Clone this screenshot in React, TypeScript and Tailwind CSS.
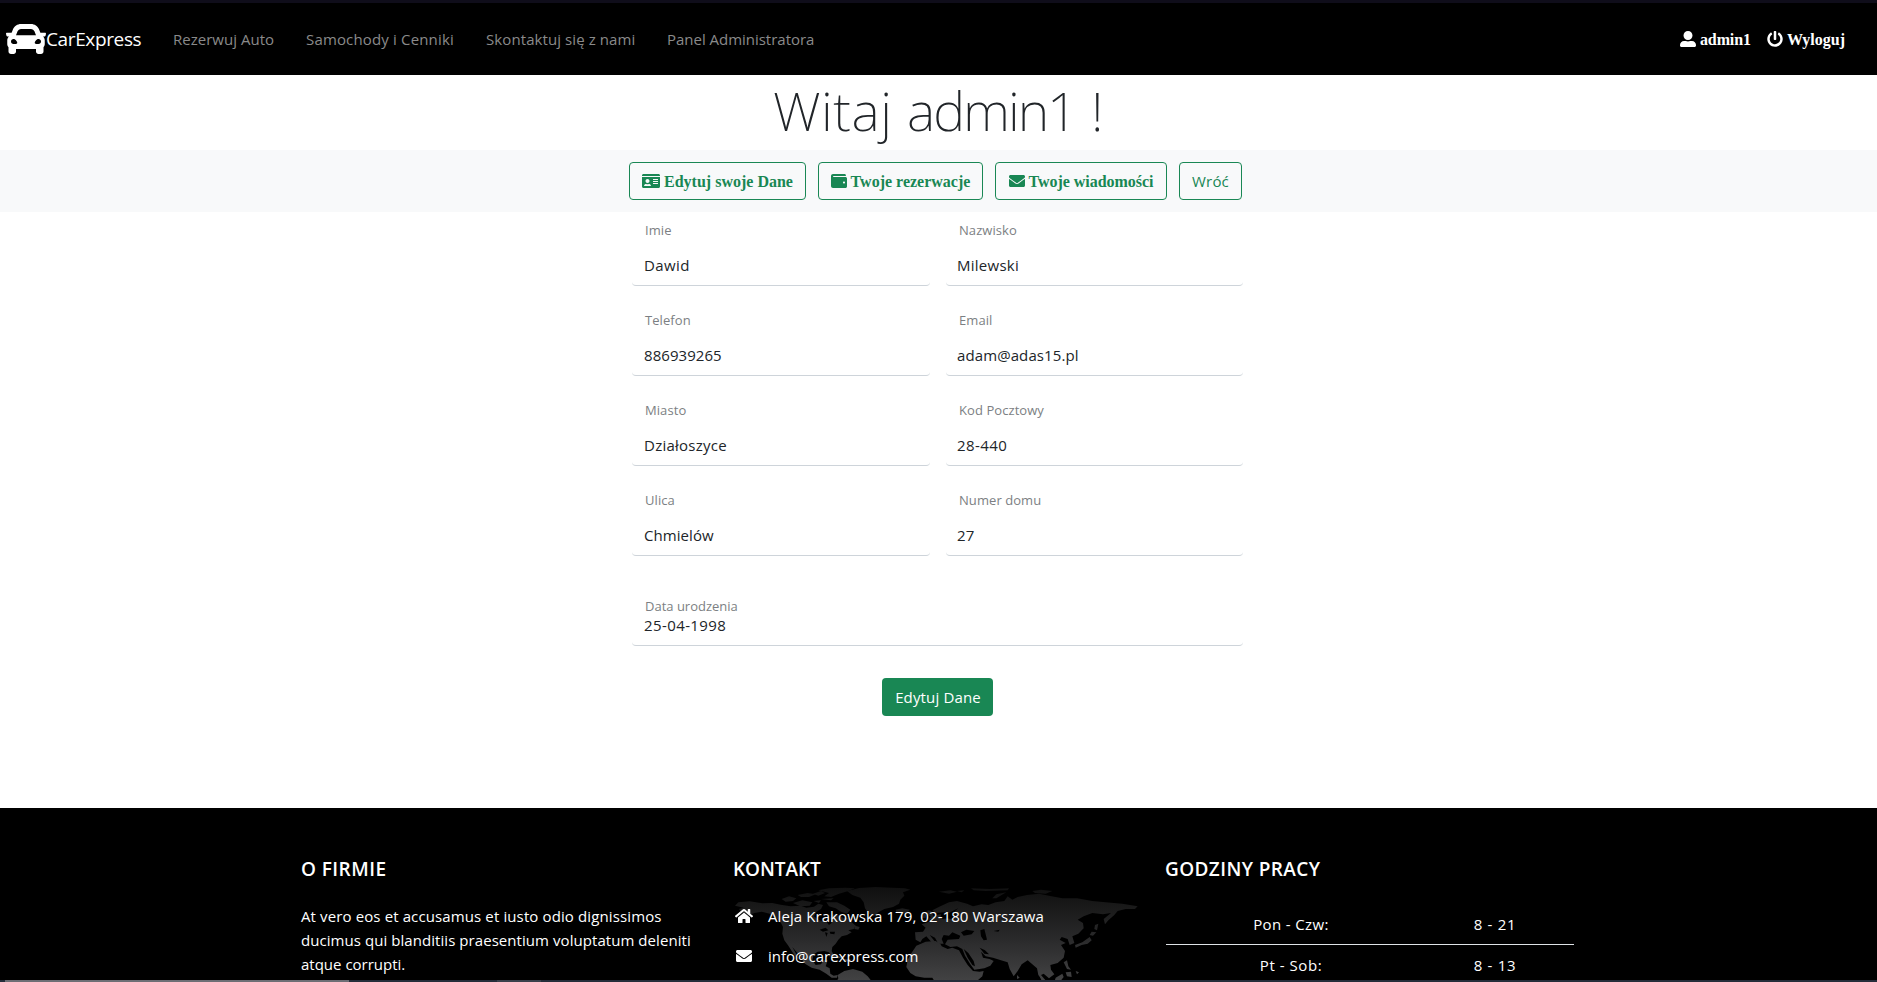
import type { ReactNode } from "react";
import {
  FaCar,
  FaEnvelope,
  FaHome,
  FaIdCard,
  FaPowerOff,
  FaUserAlt,
  FaWallet,
} from "react-icons/fa";

const sans = "font-['Open_Sans','Noto_Sans',sans-serif]";
const serif = "font-['Liberation_Serif',serif] font-bold text-[16px] leading-6";

function Navbar() {
  return (
    <nav className="flex h-[75px] items-center border-t-[3px] border-[#0f0d1a] bg-black pl-[6px] text-[15px] leading-6 text-[#8a8a8a]">
      <a className="flex w-[167px] items-center text-white">
        <FaCar className="size-10 shrink-0" />
        <span className="text-[19px] tracking-[-0.37px]">CarExpress</span>
      </a>
      <a className="w-[133px] tracking-[0.02px]">Rezerwuj Auto</a>
      <a className="w-[180px] tracking-[0.16px]">Samochody i Cenniki</a>
      <a className="w-[181px] tracking-[0.09px]">Skontaktuj się z nami</a>
      <a className="tracking-[-0.02px]">Panel Administratora</a>
      <div className={`ml-auto flex items-center gap-4 pr-8 text-white ${serif}`}>
        <a className="flex items-center gap-1 tracking-[-0.1px]">
          <FaUserAlt className="size-4" />
          <span className="pt-0.5">admin1</span>
        </a>
        <a className="flex items-center gap-1">
          <FaPowerOff className="size-4" />
          <span className="pt-0.5">Wyloguj</span>
        </a>
      </div>
    </nav>
  );
}

function OutlineButton({ icon, children, className }: { icon?: ReactNode; children: ReactNode; className: string }) {
  return (
    <button
      className={`flex h-[38px] items-center justify-center gap-1 whitespace-nowrap rounded border border-[#198754] text-[#198754] ${className}`}
    >
      {icon}
      <span className={icon ? "pt-0.5" : ""}>{children}</span>
    </button>
  );
}

function Field({ label, value, tracking }: { label: string; value: string; tracking: string }) {
  return (
    <div className="flex h-[74px] flex-col rounded-[4px] border-b border-[#ced4da] pt-2 pl-3">
      <label className="pl-px text-[13px] leading-5 tracking-[0.07px] text-[#7c7f83]">{label}</label>
      <span className={`mt-[13px] text-[15px] leading-6 text-[#212529] ${tracking}`}>{value}</span>
    </div>
  );
}

const fields = [
  { label: "Imie", value: "Dawid", tracking: "tracking-[0.4px]" },
  { label: "Nazwisko", value: "Milewski", tracking: "tracking-[0.26px] -ml-px" },
  { label: "Telefon", value: "886939265", tracking: "tracking-[0.05px]" },
  { label: "Email", value: "adam@adas15.pl", tracking: "tracking-[0.1px] -ml-px" },
  { label: "Miasto", value: "Działoszyce", tracking: "tracking-[0.25px]" },
  { label: "Kod Pocztowy", value: "28-440", tracking: "tracking-[0.4px] -ml-px" },
  { label: "Ulica", value: "Chmielów", tracking: "tracking-[0.06px]" },
  { label: "Numer domu", value: "27", tracking: "tracking-[0.2px] -ml-px" },
];

function WorldMap() {
  return (
    <svg className="absolute top-[78px] left-0 h-[96px] w-[408px]" viewBox="42 285 1224 288" aria-hidden="true">
      <defs>
        <linearGradient id="land" x1="0" y1="285" x2="0" y2="573" gradientUnits="userSpaceOnUse">
          <stop offset="0" stopColor="#0f0f0f" />
          <stop offset="0.5" stopColor="#272728" />
          <stop offset="1" stopColor="#434344" />
        </linearGradient>
      </defs>
      <g fill="url(#land)">
        {/* North and Central America */}
        <path d="M48 344L58 334 92 331 130 337 160 336 185 341 215 346 245 344 262 350 285 347 298 338 312 342 306 354 292 362 285 376 300 388 322 392 330 402 338 396 334 380 344 370 362 374 374 382 388 380 398 394 410 404 404 414 388 418 398 424 384 432 368 436 358 446 350 458 340 468 338 480 344 492 338 496 330 484 316 480 296 482 284 490 280 508 290 522 306 520 314 508 326 508 320 526 332 532 334 548 344 554 356 552 354 560 338 560 322 548 302 536 278 530 258 518 246 500 232 482 220 468 232 490 240 506 232 500 218 480 208 464 196 448 190 428 192 408 186 396 172 380 152 368 128 362 106 366 92 372 70 382 84 368 66 362 60 354 74 350Z" />
        <path d="M188 324L210 316 232 322 222 330 200 332ZM222 336L250 328 280 334 272 344 244 346ZM236 312L266 306 290 310 270 318 246 318ZM282 308L306 300 318 306 298 314ZM284 330L306 328 300 336ZM298 298L330 292 380 290 408 292 388 300 360 308 336 318 316 316 330 306ZM306 324L344 322 336 328ZM322 334L354 334 376 344 394 356 384 368 366 362 350 352 330 346ZM326 494L346 490 370 500 358 502 340 498ZM376 504L398 506 392 512 376 510ZM408 404L422 408 418 416 406 414Z" />
        {/* Greenland and Iceland */}
        <path d="M384 300L420 291 470 288 520 290 558 292 574 296 552 304 556 314 544 326 540 338 522 348 496 354 478 364 464 376 450 368 438 352 434 334 424 320 400 312ZM530 356L550 352 572 356 566 364 546 368 532 364Z" />
        {/* South America */}
        <path d="M356 552L376 540 402 534 430 542 446 556 460 573 352 573 358 562Z" />
        {/* Europe and Asia */}
        <path d="M590 446L588 424 612 422 620 410 608 400 626 394 640 386 650 372 666 370 664 384 700 382 712 370 706 362 718 352 708 356 690 366 676 364 650 366 640 358 664 346 690 334 714 330 744 338 762 346 788 340 808 342 830 334 856 330 866 316 880 326 896 318 924 312 960 308 990 314 1030 322 1074 322 1120 330 1160 334 1210 338 1256 346 1248 354 1220 354 1196 360 1186 372 1168 388 1158 400 1154 384 1176 366 1152 370 1120 366 1094 376 1076 386 1092 396 1094 412 1078 428 1060 436 1066 456 1052 462 1046 444 1028 438 1022 446 1040 456 1026 462 1038 480 1034 500 1016 516 994 522 996 536 1006 550 990 562 974 548 966 552 984 573 974 573 958 552 954 532 940 520 926 508 908 520 896 540 884 556 872 534 866 514 846 508 822 500 800 496 786 482 792 500 812 504 824 510 814 524 796 532 766 536 754 520 738 494 730 474 714 466 694 468 678 460 686 446 720 444 724 434 700 424 690 434 674 432 668 444 674 458 658 458 648 440 632 432 648 452 640 456 622 436 610 444 604 454Z" />
        <path d="M626 358L636 360 644 376 652 382 628 386 636 378 624 370ZM608 370L622 368 620 380 608 382ZM640 454L652 456 648 460ZM660 302L694 298 714 302 690 308ZM714 300L736 298 728 304ZM820 322L832 310 862 304 848 312 832 322ZM940 300L966 296 1000 300 980 308 948 306ZM756 292L812 294 870 292 866 298 800 300 764 298Z" />
        {/* Africa */}
        <path d="M592 464L620 452 650 450 664 458 668 466 686 474 700 470 720 478 732 500 746 522 762 540 782 542 794 540 790 556 770 573 648 573 640 560 616 560 590 556 574 546 562 528 566 506 576 488Z" />
        {/* Islands of the Pacific */}
        <path d="M1128 402L1138 398 1134 418 1126 414ZM1118 422L1132 424 1122 434 1112 432ZM1112 438L1118 448 1106 458 1088 462 1070 470 1068 462 1090 454ZM1034 514L1044 508 1048 526 1056 536 1044 534ZM1040 544L1056 542 1058 558 1044 556ZM1010 560L1030 548 1034 558 1022 573 1006 573ZM962 556L984 573 970 573ZM894 552L902 560 894 564ZM1070 540L1080 544 1074 550Z" />
      </g>
      <g fill="#000">
        {/* Great Lakes and inland seas */}
        <path d="M302 416L320 410 328 418 312 422ZM318 424L326 426 322 438ZM332 422L348 422 346 430 334 428ZM302 384L316 374 326 380 320 388ZM726 424L742 416 766 420 758 430 734 434ZM784 418L796 414 800 430 804 446 794 448 786 436ZM734 474L748 486 764 510 768 526 760 522 746 500ZM782 470L798 478 810 490 796 488ZM824 420L842 416 838 422ZM706 360L696 372 688 382 698 384 712 372Z" />
      </g>
    </svg>
  );
}

function Footer() {
  const heading = "text-[19px] leading-6 font-semibold";
  return (
    <footer className="grid h-[172px] shrink-0 grid-cols-[432px_432px_408px] overflow-hidden bg-black pt-[49px] pl-[301px] text-[15px] leading-6 text-white">
      <section>
        <h5 className={`${heading} tracking-[0.45px]`}>O FIRMIE</h5>
        <p className="mt-[23px] whitespace-nowrap">
          <span className="tracking-[0.12px]">At vero eos et accusamus et iusto odio dignissimos</span>
          <br />
          <span className="tracking-[0.06px]">ducimus qui blanditiis praesentium voluptatum deleniti</span>
          <br />
          atque corrupti.
        </p>
      </section>
      <section className="relative -mt-[49px] pt-[49px]">
        <WorldMap />
        <div className="relative">
          <h5 className={`${heading} tracking-[-0.06px]`}>KONTAKT</h5>
          <ul className="mt-[23px] flex flex-col gap-4">
            <li className="flex items-center">
              <span className="mr-[13px] flex w-[22px] justify-center">
                <FaHome className="h-4 w-[18px]" />
              </span>
              <span className="tracking-[0.08px]">Aleja Krakowska 179, 02-180 Warszawa</span>
            </li>
            <li className="flex items-center">
              <span className="mr-[13px] flex w-[22px] justify-center">
                <FaEnvelope className="size-4" />
              </span>
              info@carexpress.com
            </li>
          </ul>
        </div>
      </section>
      <section>
        <h5 className={`${heading} tracking-[0.4px]`}>GODZINY PRACY</h5>
        <div className="mt-[23px] ml-px grid grid-cols-[249px_159px] text-center">
          <span className="border-b border-[#dee2e6] py-2 pl-px tracking-[0.38px]">Pon - Czw:</span>
          <span className="border-b border-[#dee2e6] py-2 pl-px tracking-[0.7px]">8 - 21</span>
          <span className="py-2 pl-px tracking-[0.55px]">Pt - Sob:</span>
          <span className="py-2 pl-px tracking-[0.7px]">8 - 13</span>
        </div>
      </section>
    </footer>
  );
}

export default function App() {
  return (
    <div className={`flex h-[982px] w-[1877px] flex-col overflow-hidden bg-white ${sans}`}>
      <Navbar />
      <h1 className="flex h-[75px] gap-[20px] pl-[773px] font-['Noto_Sans',sans-serif] text-[54px] leading-[71px] font-extralight text-[#212529]">
        <span className="w-[114px] tracking-[0.5px]">Witaj</span>
        <span className="w-[164px] tracking-[-2px]">admin1</span>
        <span>!</span>
      </h1>
      <div className="flex h-[62px] items-center gap-3 bg-[#f8f9fa] pl-[629px]">
        <OutlineButton icon={<FaIdCard className="h-4 w-[18px]" />} className={`w-[177px] ${serif}`}>
          Edytuj swoje Dane
        </OutlineButton>
        <OutlineButton icon={<FaWallet className="size-4" />} className={`w-[165px] ${serif}`}>
          Twoje rezerwacje
        </OutlineButton>
        <OutlineButton icon={<FaEnvelope className="size-4" />} className={`w-[172px] tracking-[-0.03px] ${serif}`}>
          Twoje wiadomości
        </OutlineButton>
        <OutlineButton className="w-[63px] text-[15px] tracking-[0.2px]">Wróć</OutlineButton>
      </div>
      <main className="flex flex-1 flex-col pl-[632px]">
        <div className="grid grid-cols-[298px_297px] gap-4">
          {fields.map((f) => (
            <Field key={f.label} {...f} />
          ))}
        </div>
        <div className="mt-4 flex h-[74px] w-[611px] flex-col rounded-[4px] border-b border-[#ced4da] pt-[26px] pl-3">
          <label className="pl-px text-[13px] leading-4 text-[#7c7f83]">Data urodzenia</label>
          <span className="-mt-px text-[15px] leading-6 tracking-[0.4px] text-[#212529]">25-04-1998</span>
        </div>
        <button className="mt-8 ml-[250px] h-[38px] w-[111px] rounded bg-[#198754] pl-px text-[15px] tracking-[0.15px] text-white">
          Edytuj Dane
        </button>
      </main>
      <Footer />
      <div className="flex h-0.5 shrink-0 bg-[#252d3a] pl-[5px]">
        <div className="w-[344px] bg-[#6d6e75]" />
        <div className="ml-[148px] w-11 bg-[#3a404b]" />
      </div>
    </div>
  );
}
